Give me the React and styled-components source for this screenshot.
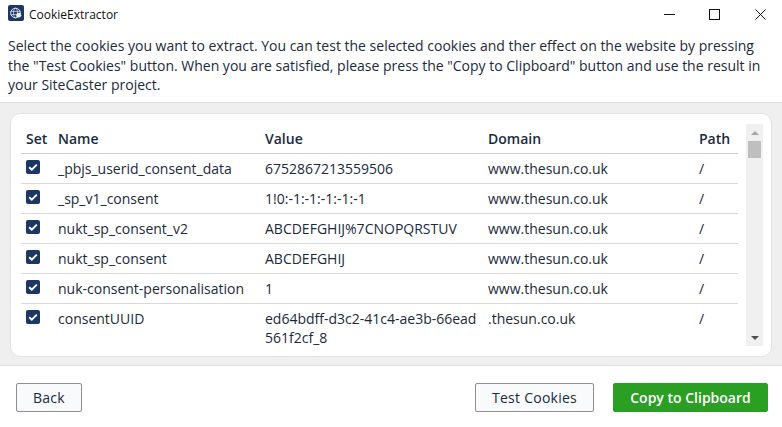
import React from 'react';
import { createGlobalStyle, styled } from 'styled-components';

const GlobalStyle = createGlobalStyle`
    html, body {
        margin: 0;
        padding: 0;
        background: #fff;
    }
    * {
        box-sizing: border-box;
    }
`;

const cookies = [
    { name: '_pbjs_userid_consent_data', value: '6752867213559506', domain: 'www.thesun.co.uk' },
    { name: '_sp_v1_consent', value: '1!0:-1:-1:-1:-1:-1', domain: 'www.thesun.co.uk' },
    { name: 'nukt_sp_consent_v2', value: 'ABCDEFGHIJ%7CNOPQRSTUV', domain: 'www.thesun.co.uk' },
    { name: 'nukt_sp_consent', value: 'ABCDEFGHIJ', domain: 'www.thesun.co.uk' },
    { name: 'nuk-consent-personalisation', value: '1', domain: 'www.thesun.co.uk' },
    { name: 'consentUUID', value: 'ed64bdff-d3c2-41c4-ae3b-66ead561f2cf_8', domain: '.thesun.co.uk' },
];

function AppIcon() {
    return (
        <svg width="16" height="16" viewBox="0 0 16 16">
            <rect width="16" height="16" rx="2" fill="#1c3764" />
            <circle cx="7.5" cy="8" r="4.8" fill="none" stroke="#dfe5ef" strokeWidth="1" />
            <ellipse cx="7.5" cy="8" rx="2" ry="4.8" fill="none" stroke="#dfe5ef" strokeWidth="0.7" />
            <path d="M2.7 6.4h9.6M2.7 9.6h9.6" stroke="#dfe5ef" strokeWidth="0.7" />
            <circle cx="10.8" cy="10.2" r="2.4" fill="#eef1f6" />
        </svg>
    );
}

function CheckBox() {
    return (
        <svg width="14" height="14" viewBox="0 0 14 14">
            <rect width="14" height="14" rx="2" fill="#1c3764" />
            <path d="M3.2 7.2l2.6 2.5 5-5" fill="none" stroke="#fff" strokeWidth="1.9" />
        </svg>
    );
}

export default function App() {
    return (
        <Window>
            <GlobalStyle />
            <TitleBar>
                <IconSlot><AppIcon /></IconSlot>
                <TitleText>CookieExtractor</TitleText>
                <WindowButtons>
                    <WindowButton>
                        <svg width="11" height="11" viewBox="0 0 11 11"><path d="M0 5.5h11" stroke="#111" /></svg>
                    </WindowButton>
                    <WindowButton>
                        <svg width="11" height="11" viewBox="0 0 11 11"><rect x="0.5" y="0.5" width="10" height="10" fill="none" stroke="#111" /></svg>
                    </WindowButton>
                    <WindowButton $wide>
                        <svg width="11" height="11" viewBox="0 0 11 11"><path d="M0.5 0.5l10 10M10.5 0.5l-10 10" stroke="#111" /></svg>
                    </WindowButton>
                </WindowButtons>
            </TitleBar>
            <Intro>
                Select the cookies you want to extract. You can test the selected cookies and ther effect on the website by pressing
                the "Test Cookies" button. When you are satisfied, please press the "Copy to Clipboard" button and use the result in
                your SiteCaster project.
            </Intro>
            <Panel>
                <Card>
                    <TableClip>
                        <Table>
                            <thead>
                                <tr>
                                    <HeadCell $width={37}>Set</HeadCell>
                                    <HeadCell $width={207}>Name</HeadCell>
                                    <HeadCell $width={223}>Value</HeadCell>
                                    <HeadCell $width={211}>Domain</HeadCell>
                                    <HeadCell>Path</HeadCell>
                                </tr>
                            </thead>
                            <tbody>
                                {cookies.map((cookie) => (
                                    <Row key={cookie.name}>
                                        <CheckCell><CheckBox /></CheckCell>
                                        <Cell>{cookie.name}</Cell>
                                        <ValueCell>{cookie.value}</ValueCell>
                                        <Cell>{cookie.domain}</Cell>
                                        <Cell>/</Cell>
                                    </Row>
                                ))}
                            </tbody>
                        </Table>
                    </TableClip>
                    <ScrollBar>
                        <ScrollArrow $up />
                        <ScrollThumb />
                        <ScrollArrow />
                    </ScrollBar>
                </Card>
            </Panel>
            <Footer>
                <Button $width={66}>Back</Button>
                <FooterRight>
                    <Button $width={119}>Test Cookies</Button>
                    <PrimaryButton $width={155}>Copy to Clipboard</PrimaryButton>
                </FooterRight>
            </Footer>
        </Window>
    );
}

const Window = styled.div`
    width: 782px;
    height: 427px;
    display: flex;
    flex-direction: column;
    overflow: hidden;
    background: #fff;
    color: #1b2a3d;
    font-family: "Open Sans", sans-serif;
    font-size: 14px;
`;

const TitleBar = styled.div`
    height: 28px;
    flex: none;
    display: flex;
    align-items: center;
    padding-left: 8px;
`;

const IconSlot = styled.div`
    display: flex;
    margin-bottom: 2px;
`;

const TitleText = styled.span`
    margin-left: 5px;
    font-size: 12px;
    color: #111;
`;

const WindowButtons = styled.div`
    margin-left: auto;
    margin-right: -2px;
    display: flex;
`;

const WindowButton = styled.div`
    width: ${(props) => (props.$wide ? '47px' : '45px')};
    height: 28px;
    display: flex;
    align-items: center;
    justify-content: center;
`;

const Intro = styled.p`
    margin: 0;
    height: 74px;
    flex: none;
    padding: 8px 8px 0;
    line-height: 19.5px;
`;

const Panel = styled.div`
    height: 264px;
    flex: none;
    padding: 10px;
    background: #efefef;
    border-top: 1px solid #e0e0e0;
    border-bottom: 1px solid #e0e0e0;
`;

const Card = styled.div`
    height: 244px;
    display: flex;
    padding: 10px 9px 6px 10px;
    background: #fff;
    border: 1px solid #e2e2e2;
    border-radius: 10px;
`;

const TableClip = styled.div`
    width: 717px;
    flex: none;
    overflow: hidden;
`;

const Table = styled.table`
    width: 717px;
    table-layout: fixed;
    border-collapse: collapse;
`;

const HeadCell = styled.th`
    width: ${(props) => (props.$width ? `${props.$width}px` : 'auto')};
    height: 29px;
    padding: 0 0 0 ${(props) => (props.$width === 37 ? '5px' : '0')};
    font-weight: 600;
    text-align: left;
    color: #1b2a3d;
    border-bottom: 1px solid #cfcfcf;
`;

const Cell = styled.td`
    height: 30px;
    padding: 5px 0 0;
    vertical-align: top;
    line-height: 19px;
    border-bottom: 1px solid #d9d9d9;
`;

const Row = styled.tr`
    &:last-child > td {
        border-bottom: none;
    }
`;

const CheckCell = styled(Cell)`
    padding: 6px 0 0 5px;
    & > svg {
        display: block;
    }
`;

const ValueCell = styled(Cell)`
    padding-right: 8px;
    word-break: break-all;
`;

const ScrollBar = styled.div`
    width: 17px;
    margin: 0 0 4px 8px;
    flex: none;
    display: flex;
    flex-direction: column;
    align-items: center;
    background: #f0f0f0;
`;

const ScrollArrow = styled.div`
    width: 17px;
    height: 17px;
    flex: none;
    display: flex;
    align-items: center;
    justify-content: center;
    margin-top: ${(props) => (props.$up ? '0' : 'auto')};
    &::before {
        content: '';
        border-left: 4px solid transparent;
        border-right: 4px solid transparent;
        border-bottom: ${(props) => (props.$up ? '4px solid #a6a6a6' : '0')};
        border-top: ${(props) => (props.$up ? '0' : '4px solid #505050')};
    }
`;

const ScrollThumb = styled.div`
    width: 13px;
    height: 17px;
    flex: none;
    background: #bfbfbf;
`;

const Footer = styled.div`
    flex: 1;
    display: flex;
    align-items: flex-start;
    justify-content: space-between;
    padding: 17px 14px 0 16px;
`;

const FooterRight = styled.div`
    display: flex;
    gap: 19px;
`;

const Button = styled.button`
    width: ${(props) => props.$width}px;
    height: 29px;
    padding: 0;
    font-family: inherit;
    font-size: 14px;
    letter-spacing: 0.25px;
    color: #1b2a3d;
    background: #f8fafc;
    border: 1px solid #8f8f8f;
    border-radius: 2px;
`;

const PrimaryButton = styled(Button)`
    font-weight: 600;
    letter-spacing: 0;
    color: #fff;
    background: #2b9e24;
    border-color: #2b9e24;
`;
